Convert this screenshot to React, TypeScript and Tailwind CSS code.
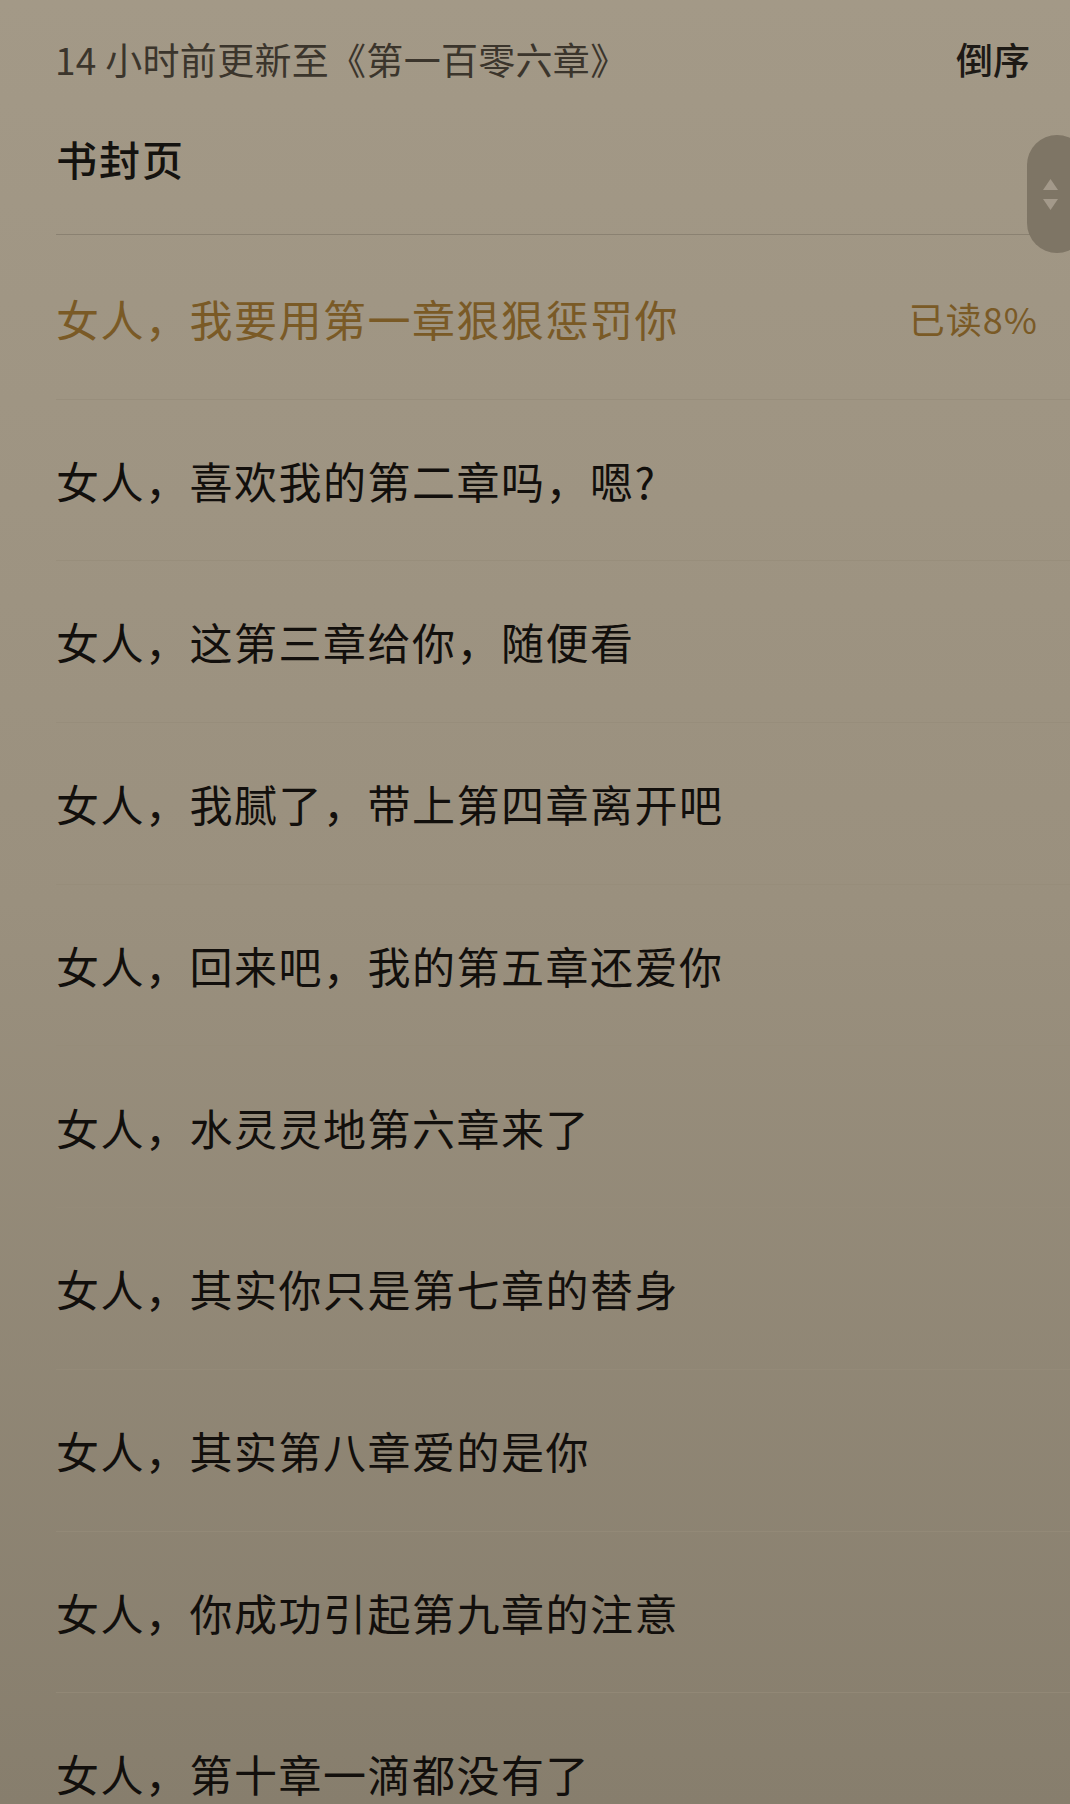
import React from 'react';

const chapters = [
  '女人，我要用第一章狠狠惩罚你',
  '女人，喜欢我的第二章吗，嗯?',
  '女人，这第三章给你，随便看',
  '女人，我腻了，带上第四章离开吧',
  '女人，回来吧，我的第五章还爱你',
  '女人，水灵灵地第六章来了',
  '女人，其实你只是第七章的替身',
  '女人，其实第八章爱的是你',
  '女人，你成功引起第九章的注意',
  '女人，第十章一滴都没有了',
];

const App: React.FC = () => {
  return (
    <div
      className="relative w-[1070px] h-[1804px] overflow-hidden bg-gradient-to-b from-[#a39987] via-[#9a907e] to-[#877e6d]"
      style={{ fontFamily: '"Noto Sans CJK SC", "Noto Sans", sans-serif' }}
    >
      {/* Header */}
      <div className="flex items-center justify-between h-[120px] pl-[55px] pr-[40px]">
        <span className="text-[37px] tracking-[0.3px] text-[#3b352c]">14 小时前更新至《第一百零六章》</span>
        <span className="text-[37px] font-medium text-[#1d1a16]">倒序</span>
      </div>

      {/* Cover */}
      <div className="ml-[56px] mr-[40px] h-[115px] pt-[15px] border-b border-[#8a8171]">
        <span className="block text-[41px] leading-[46px] font-medium tracking-[2px] text-[#14120f]">书封页</span>
      </div>

      {/* Chapter list */}
      <div className="mt-[3px]">
        {chapters.map((title, i) => (
          <div
            key={i}
            className="ml-[56px] h-[161.7px] flex items-center justify-between pr-[32px] border-b border-[#958c79]/70"
          >
            <span
              className={`text-[43px] tracking-[1.5px] ${
                i === 0 ? 'text-[#7a5a26]' : 'text-[#120f0c]'
              }`}
            >
              {title}
            </span>
            {i === 0 && (
              <span className="text-[36px] tracking-[1px] text-[#7a5a26]">已读8%</span>
            )}
          </div>
        ))}
      </div>

      {/* Scroll handle */}
      <div className="absolute top-[135px] left-[1027px] w-[60px] h-[118px] rounded-full bg-[#7e7565] flex flex-col items-start pl-[16px] justify-center gap-[9px]">
        <svg width="15" height="11" viewBox="0 0 15 11">
          <path d="M7.5 0 L15 11 L0 11 Z" fill="#a3998a" />
        </svg>
        <svg width="15" height="11" viewBox="0 0 15 11">
          <path d="M0 0 L15 0 L7.5 11 Z" fill="#a3998a" />
        </svg>
      </div>
    </div>
  );
};

export default App;
